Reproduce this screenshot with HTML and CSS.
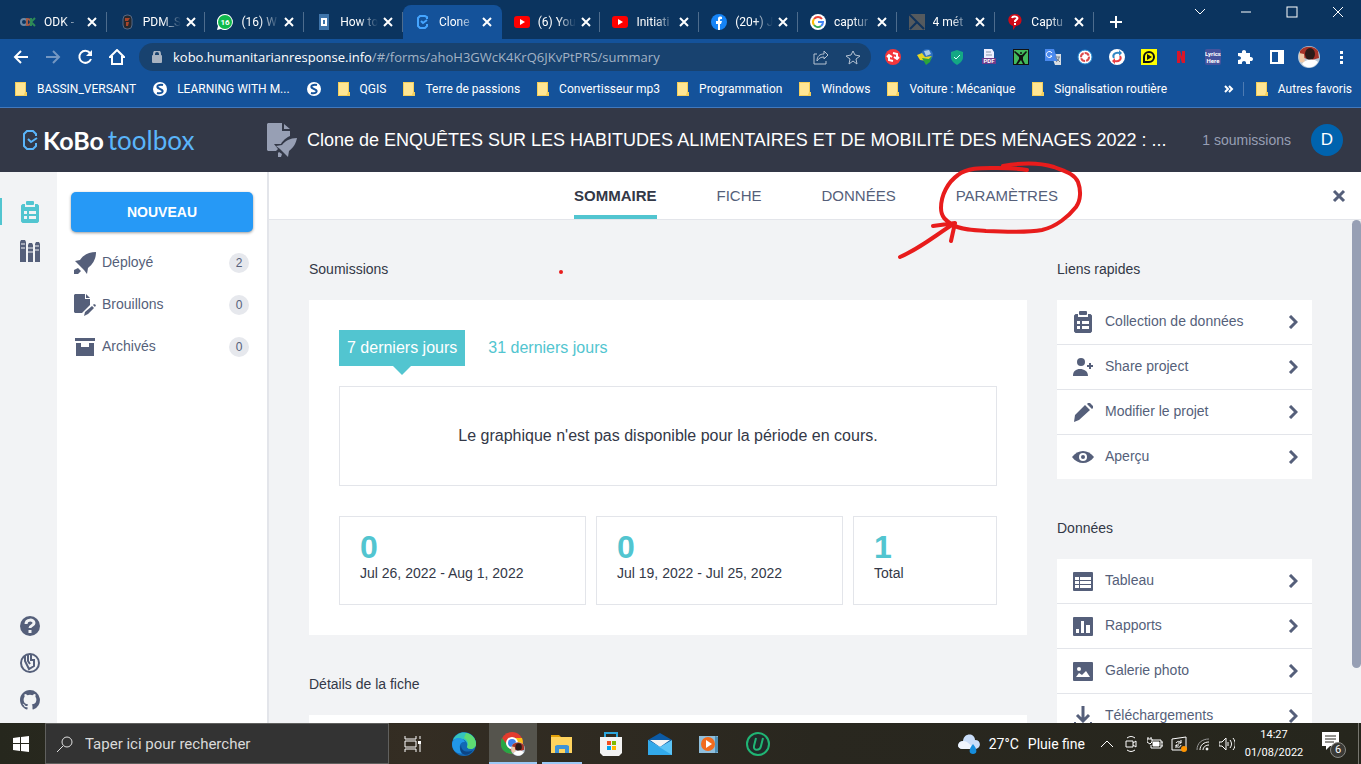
FILE: index.html
```html
<!DOCTYPE html>
<html lang="fr">
    <head>
        <meta charset="utf-8" />
        <meta name="viewport" content="width=device-width, initial-scale=1" />
        <title>Clone de ENQUÊTES | KoBoToolbox</title>
        <link rel="stylesheet" href="styles.css">
    </head>
    <body>
        <!-- shared icons -->
        <svg class="sprite" aria-hidden="true">
            <symbol id="x" viewBox="0 0 10 10"><path d="M1 1l8 8M9 1L1 9" stroke="currentColor" stroke-width="2" fill="none"/></symbol>
            <symbol id="folder" viewBox="0 0 12 14"><path d="M0 0h11v10h1v4H0z" fill="#f4cf5c"/><path d="M1 1h9v9l-1 3H1z" fill="#ffe694"/></symbol>
            <symbol id="globe" viewBox="0 0 14 14"><circle cx="7" cy="7" r="7" fill="#fff"/><path d="M10 3C6 2 3 4 5 6l4 2c2 2-1 4-5 3" fill="none" stroke="#14529a" stroke-width="2"/></symbol>
            <symbol id="chev" viewBox="0 0 10 14"><path d="M2 1l6 6-6 6" fill="none" stroke="#555f7a" stroke-width="3"/></symbol>
            <symbol id="youtube" viewBox="0 0 16 12"><rect width="16" height="12" rx="3" fill="#f00"/><path d="M6 3v6l5-3z" fill="#fff"/></symbol>
            <symbol id="clipboard" viewBox="0 0 18 22"><path d="M1.500 3H4v3h10V3h2.500L18 4.500v16L16.500 22h-15L0 20.500v-16zM3 10v3h3v-3zm5 0v3h7v-3zm-5 5v3h3v-3zm5 0v3h7v-3z" fill="currentColor" fill-rule="evenodd"/><rect x="5" y="0" width="8" height="4" rx="1" fill="currentColor"/></symbol>
            <symbol id="face" viewBox="0 0 22 22"><circle cx="11" cy="11" r="11" fill="#b9c8d6"/><path d="M2 5C5 0 16-1 20 5l1 7-7 2-12-3z" fill="#a63328"/><path d="M1 7l5 1 1 9-5-1z" fill="#efc8a6"/><ellipse cx="12" cy="8" rx="5" ry="6" fill="#2b1b18"/><path d="M4 18c3-5 12-6 16-2-3 5-10 8-16 2z" fill="#fff"/></symbol>
        </svg>

        <div class="tabStrip">
            <div class="tabs">
                <div class="tab"><svg class="tabIcon" viewBox="0 0 16 16"><ellipse cx="4" cy="8" rx="3" ry="3" fill="none" stroke="#6b87a5" stroke-width="2"/><path d="M7 5c5 0 5 6 0 6z" fill="none" stroke="#a75c46" stroke-width="2"/><path d="M11 4v8M15 4l-4 4 4 4" fill="none" stroke="#2e8b57" stroke-width="2"/></svg><span class="tabTitle">ODK -</span><button class="tabClose" aria-label="Fermer"><svg><use href="#x"/></svg></button></div>
                <div class="tab"><svg class="tabIcon" viewBox="0 0 16 16"><rect x="4" y="1" width="9" height="14" rx="4" fill="#26282d" stroke="#566985"/><path d="M6 4h5l-2 3H6zM7 8h3l-1 4H7z" fill="#a8452b"/></svg><span class="tabTitle">PDM_S</span><button class="tabClose" aria-label="Fermer"><svg><use href="#x"/></svg></button></div>
                <div class="tab"><svg class="tabIcon" viewBox="0 0 16 16"><path d="M8 0a8 8 0 1 1-4 15l-4 1 1-4A8 8 0 0 1 8 0z" fill="#fff"/><circle cx="8" cy="8" r="7" fill="#10b94c"/><text x="8" y="11" text-anchor="middle" class="tinyCount">16</text></svg><span class="tabTitle">(16) W</span><button class="tabClose" aria-label="Fermer"><svg><use href="#x"/></svg></button></div>
                <div class="tab"><svg class="tabIcon" viewBox="0 0 16 16"><rect x="3" width="10" height="16" fill="#3f75ab"/><path d="M6 5h4v6H6z" fill="none" stroke="#fff" stroke-width="2"/></svg><span class="tabTitle">How to</span><button class="tabClose" aria-label="Fermer"><svg><use href="#x"/></svg></button></div>
                <div class="tab active"><svg class="tabIcon" viewBox="0 0 16 16"><path d="M12 5V3l-2-1H5L3 4v8l2 2h5l2-2v-2" fill="none" stroke="#45a5ff" stroke-width="2"/><path d="M6 7l2 2 4-3" fill="none" stroke="#45a5ff" stroke-width="2"/></svg><span class="tabTitle">Clone</span><button class="tabClose" aria-label="Fermer"><svg><use href="#x"/></svg></button></div>
                <div class="tab"><svg class="tabIcon"><use href="#youtube"/></svg><span class="tabTitle">(6) You</span><button class="tabClose" aria-label="Fermer"><svg><use href="#x"/></svg></button></div>
                <div class="tab"><svg class="tabIcon"><use href="#youtube"/></svg><span class="tabTitle">Initiati</span><button class="tabClose" aria-label="Fermer"><svg><use href="#x"/></svg></button></div>
                <div class="tab"><svg class="tabIcon" viewBox="0 0 16 16"><circle cx="8" cy="8" r="8" fill="#1684f6"/><path d="M7 16V10H5V7h2V5c0-2 1-3 4-2v2C9 5 9 5 9 7h2l-1 3H9v6z" fill="#fff"/></svg><span class="tabTitle">(20+) J</span><button class="tabClose" aria-label="Fermer"><svg><use href="#x"/></svg></button></div>
                <div class="tab"><svg class="tabIcon" viewBox="0 0 16 16"><circle cx="8" cy="8" r="8" fill="#fff"/><g fill="none" stroke-width="2"><path d="M12 5A5 5 0 0 0 4 5" stroke="#ea4335"/><path d="M4 5a5 5 0 0 0 0 6" stroke="#fbbc05"/><path d="M4 11a5 5 0 0 0 7 1" stroke="#34a853"/><path d="M8 8h5a5 5 0 0 1-2 4" stroke="#4285f4"/></g></svg><span class="tabTitle">captur</span><button class="tabClose" aria-label="Fermer"><svg><use href="#x"/></svg></button></div>
                <div class="tab"><svg class="tabIcon" viewBox="0 0 16 16"><rect width="16" height="16" fill="#555a5e"/><path d="M0 0l15 15M1 15l7-7" stroke="#10335c" stroke-width="2"/></svg><span class="tabTitle">4 mét</span><button class="tabClose" aria-label="Fermer"><svg><use href="#x"/></svg></button></div>
                <div class="tab"><svg class="tabIcon" viewBox="0 0 16 16"><path d="M8 0c8 0 9 11 1 12l-3 4v-4C-1 10 0 0 8 0z" fill="#cf0a17"/><path d="M5 4c1-3 7-1 5 1L8 7v1M8 9v2" fill="none" stroke="#fff" stroke-width="2"/></svg><span class="tabTitle">Captu</span><button class="tabClose" aria-label="Fermer"><svg><use href="#x"/></svg></button></div>
            </div>
            <button class="newTab" aria-label="Nouvel onglet"><svg viewBox="0 0 12 12"><path d="M6 0v12M0 6h12" stroke="#fff" stroke-width="2"/></svg></button>
            <div class="windowButtons">
                <button aria-label="Rechercher"><svg viewBox="0 0 12 12"><path d="M1 3l5 5 5-5"/></svg></button>
                <button aria-label="Réduire"><svg viewBox="0 0 12 12"><path d="M1 6h10"/></svg></button>
                <button aria-label="Agrandir"><svg viewBox="0 0 12 12"><rect x="1" y="1" width="10" height="10"/></svg></button>
                <button aria-label="Fermer"><svg viewBox="0 0 12 12"><path d="M1 1l10 10M11 1L1 11"/></svg></button>
            </div>
        </div>

        <div class="toolbar">
            <button aria-label="Retour"><svg viewBox="0 0 16 16"><path d="M15 8H2M8 2L2 8l6 6" fill="none" stroke="#fff" stroke-width="2"/></svg></button>
            <button aria-label="Avancer"><svg viewBox="0 0 16 16"><path d="M1 8h13M8 2l6 6-6 6" fill="none" stroke="#7497c2" stroke-width="2"/></svg></button>
            <button aria-label="Actualiser"><svg viewBox="0 0 16 16"><path d="M13 4a6 6 0 1 0 1 6" fill="none" stroke="#fff" stroke-width="2"/><path d="M15 1v6H9z" fill="#fff"/></svg></button>
            <button aria-label="Accueil"><svg viewBox="0 0 16 16"><path d="M1 8l7-7 7 7h-2v7H3V8z" fill="none" stroke="#fff" stroke-width="2"/></svg></button>
            <div class="omnibox">
                <svg class="lock" viewBox="0 0 10 12"><rect y="4" width="10" height="8" rx="1" fill="#a8b3c1"/><path d="M2 5V3a3 3 0 0 1 6 0v2" fill="none" stroke="#a8b3c1" stroke-width="2"/></svg>
                <a class="url" href="#">kobo.humanitarianresponse.info<span>/#/forms/ahoH3GWcK4KrQ6JKvPtPRS/summary</span></a>
                <button aria-label="Partager"><svg viewBox="0 0 16 16" fill="none" stroke="#b5c2d2"><path d="M4 5H1v10h12v-3M4 12c0-5 3-7 7-7V2l4 4-4 4V8C8 8 6 9 4 12z"/></svg></button>
                <button aria-label="Favori"><svg viewBox="0 0 16 16"><path d="M8 2l2 4 5 1-4 3 1 5-4-3-4 3 1-5-4-3 5-1z" fill="none" stroke="#b5c2d2"/></svg></button>
            </div>
            <button aria-label="Extension"><svg viewBox="0 0 16 16"><circle cx="8" cy="8" r="8" fill="#f4373b"/><path d="M4 7v4l4 1M2 8l2-2 3 2M12 9V5L8 4M14 8l-2 2-3-2" fill="none" stroke="#fff" stroke-width="2"/></svg></button>
            <button aria-label="Extension"><svg viewBox="0 0 16 16"><circle cx="10" cy="6" r="6" fill="#2d6fc0"/><path d="M7 2l5-1 2 4-5 2z" fill="#a9cbe8"/><path d="M0 6l5-2 3 4 7-1-5 5-7-1z" fill="#e5d526"/><path d="M5 9l7 1 3-3-2 6-4 3z" fill="#2ca43a"/></svg></button>
            <button aria-label="Extension"><svg viewBox="0 0 16 16"><path d="M2 3l6-2 6 2v5c0 4-3 6-6 8-3-2-6-4-6-8z" fill="#14a884"/><path d="M5 8l2 2 4-4" fill="none" stroke="#dff" stroke-width="1"/></svg></button>
            <button aria-label="Extension"><svg viewBox="0 0 16 16"><path d="M3 0h8l2 3v6H3z" fill="#eef"/><path d="M5 3h5M5 6h6" stroke="#89a"/><rect x="1" y="9" width="14" height="6" fill="#6e3b8b"/><text x="8" y="14" text-anchor="middle" class="extText">PDF</text></svg></button>
            <button aria-label="Extension"><svg viewBox="0 0 16 16"><rect width="16" height="16" fill="#111"/><rect x="1" y="1" width="14" height="14" fill="#42b95c"/><circle cx="8" cy="4" r="1" fill="#111"/><path d="M2 2l5 4h2l4-4 1 1-4 5v3l2 4H10L8 11l-3 4H3l3-5V8L1 3z" fill="#111"/></svg></button>
            <button aria-label="Extension"><svg viewBox="0 0 16 16"><path d="M6 5h10v11h-6z" fill="#d8dde3"/><path d="M0 0h9l4 12H0z" fill="#4a89ee"/><path d="M7 4a3 3 0 1 0 0 3H5" fill="none" stroke="#fff"/><path d="M10 8h5m-1 0c0 3-2 4-3 5m0-4l4 4" fill="none" stroke="#78838e"/></svg></button>
            <button aria-label="Extension"><svg viewBox="0 0 16 16"><circle cx="8" cy="8" r="7" fill="#fff" stroke="#248bd3"/><circle cx="8" cy="8" r="4" fill="none" stroke="#dc4b4d" stroke-dasharray="5 1" stroke-width="2"/><circle cx="8" cy="8" r="2" fill="#fff"/></svg></button>
            <button aria-label="Extension"><svg viewBox="0 0 16 16"><circle cx="8" cy="8" r="8" fill="#fff"/><path d="M10 4C6 3 3 6 5 9" fill="none" stroke="#3187c5" stroke-width="2"/><path d="M10 1l3 3-3 3z" fill="#3187c5"/><path d="M6 12c4 1 7-2 5-5" fill="none" stroke="#eb3e43" stroke-width="2"/><path d="M6 9v6l-3-3z" fill="#eb3e43"/></svg></button>
            <button aria-label="Extension"><svg viewBox="0 0 16 16"><rect width="16" height="16" fill="#ff0"/><path d="M3 13V8a5 5 0 1 1 5 5z" fill="none" stroke="#111" stroke-width="2"/><path d="M6 5v6l5-3z" fill="#111"/></svg></button>
            <button aria-label="Extension"><svg viewBox="0 0 16 16"><path d="M4 2h3l2 6V2h3v12H9L7 8v6H4z" fill="#d8162a"/></svg></button>
            <button aria-label="Extension"><svg viewBox="0 0 16 16"><rect width="16" height="16" rx="2" fill="#45539d"/><text x="8" y="7" text-anchor="middle" class="extText">Lyrics</text><text x="8" y="14" text-anchor="middle" class="extText">Here</text></svg></button>
            <button aria-label="Extensions"><svg viewBox="0 0 16 16"><path d="M1 4h4c-1-4 5-4 4 0h4v4c4-1 4 5 0 4v3H9c1-4-5-4-4 0H1v-4c4 0 4-4 0-4z" fill="#fff"/></svg></button>
            <button aria-label="Panneau latéral"><svg viewBox="0 0 16 16"><path d="M1 1h14v14H1zM3 3v10h6V3z" fill="#fff" fill-rule="evenodd"/></svg></button>
            <button class="profile" aria-label="Profil"><svg><use href="#face"/></svg></button>
            <button aria-label="Menu"><svg viewBox="0 0 16 16" fill="#fff"><path d="M7 2h3v3H7zM7 7h3v3H7zM7 12h3v3H7z"/></svg></button>
        </div>

        <nav class="bookmarks">
            <a href="#"><svg class="folder"><use href="#folder"/></svg>BASSIN_VERSANT</a>
            <a href="#"><svg class="globe"><use href="#globe"/></svg>LEARNING WITH M...</a>
            <a href="#" aria-label="Site"><svg class="globe"><use href="#globe"/></svg></a>
            <a href="#"><svg class="folder"><use href="#folder"/></svg>QGIS</a>
            <a href="#"><svg class="folder"><use href="#folder"/></svg>Terre de passions</a>
            <a href="#"><svg class="folder"><use href="#folder"/></svg>Convertisseur mp3</a>
            <a href="#"><svg class="folder"><use href="#folder"/></svg>Programmation</a>
            <a href="#"><svg class="folder"><use href="#folder"/></svg>Windows</a>
            <a href="#"><svg class="folder"><use href="#folder"/></svg>Voiture : Mécanique</a>
            <a href="#"><svg class="folder"><use href="#folder"/></svg>Signalisation routière</a>
            <button class="more" aria-label="Autres"><svg viewBox="0 0 10 8"><path d="M1 1l3 3-3 3M5 1l3 3-3 3" fill="none" stroke="#fff" stroke-width="2"/></svg></button>
            <a class="others" href="#"><svg class="folder"><use href="#folder"/></svg>Autres favoris</a>
        </nav>

        <header class="appHeader">
            <a class="logo" href="#">
                <svg viewBox="0 0 15 20"><path d="M13 6V4l-3-3H4L1 4v12l3 3h6l3-3v-3" fill="none" stroke="#5ab5fa" stroke-width="2"/><path d="M5 9l3 3 6-4" fill="none" stroke="#5ab5fa" stroke-width="2"/></svg>
                <span class="kobo">KoBo</span><span class="toolbox">toolbox</span>
            </a>
            <svg class="projectIcon" viewBox="0 0 30 34"><path d="M1 0h14v8h8v5c-6 3-8 6-9 8H7l4 5-2 2H1L0 27V1zM17 1l6 5h-6z" fill="#979fb4"/><path d="M30 15c-7 0-12 3-15 7l-6 1 4 3 4 4 4 4 1-6c5-4 7-8 8-13zM12 29l3 2-1 3h-3v-4z" fill="#979fb4"/></svg>
            <h1 class="title">Clone de ENQUÊTES SUR LES HABITUDES ALIMENTAIRES ET DE MOBILITÉ DES MÉNAGES 2022 : ...</h1>
            <span class="count">1 soumissions</span>
            <button class="avatar">D</button>
        </header>

        <div class="app">
            <nav class="rail">
                <a class="current" href="#" aria-label="Projets"><svg class="railClip"><use href="#clipboard"/></svg></a>
                <a href="#" aria-label="Bibliothèque"><svg viewBox="0 0 20 22"><path d="M0 2l1-2h4l1 2v20H0zM8 5l1-2h3l1 2v17H8zM15 4l1-2h3l1 2v18h-5z" fill="#555f7a"/><path d="M1 4h4M1 8h4M8 8h5M8 12h5M15 6h4M15 10h4" stroke="#f2f3f5"/></svg></a>
                <div class="railBottom">
                    <a href="#" aria-label="Aide"><svg viewBox="0 0 20 20"><circle cx="10" cy="10" r="10" fill="#555f7a"/><path d="M6 8c0-5 8-5 8-1 0 3-4 2-4 5M10 14v3" fill="none" stroke="#f2f3f5" stroke-width="3"/></svg></a>
                    <a href="#" aria-label="Communauté"><svg viewBox="0 0 20 20" fill="none" stroke="#555f7a" stroke-width="2"><circle cx="10" cy="10" r="9"/><path d="M5 3v5l4 8 5-3V7h-3V2M8 2v6l2 3"/></svg></a>
                    <a href="#" aria-label="GitHub"><svg viewBox="0 0 16 16"><path fill="#555f7a" d="M8 0C3.580 0 0 3.580 0 8c0 3.540 2.290 6.530 5.470 7.590.4.070.55-.17.55-.38V13.700c-2.230.48-2.700-.95-2.700-.95-.36-.92-.9-1.170-.9-1.170-.72-.5.06-.49.06-.49.8.06 1.230.83 1.230.83.71 1.220 1.870.87 2.330.66.070-.52.28-.87.5-1.070-1.780-.2-3.640-.89-3.640-3.950 0-.87.31-1.590.82-2.150-.08-.2-.36-1.020.08-2.120 0 0 .67-.21 2.200.82a7.600 7.600 0 0 1 4 0c1.530-1.040 2.200-.82 2.200-.82.44 1.100.16 1.920.08 2.120.51.56.82 1.270.82 2.150 0 3.070-1.870 3.750-3.650 3.950.29.25.54.73.54 1.480v2.200c0 .21.15.46.55.38A8 8 0 0 0 8 0z"/></svg></a>
                </div>
            </nav>

            <aside class="drawer">
                <button class="newButton">NOUVEAU</button>
                <a class="filter" href="#"><svg viewBox="0 0 22 22"><path d="M22 0C15 0 9 3 6 8l-5 1 4 4 5 5 3 4 1-6c5-4 8-9 8-16zM4 16l3 3-3 3H0v-4z" fill="#555f7a"/></svg><span>Déployé</span><span class="badge">2</span></a>
                <a class="filter" href="#"><svg viewBox="0 0 22 22"><path d="M1 0h10v5h5v6l-8 8H1l-1-1V1zM12 0l4 4h-4zM18 12l2 2-6 6-4 2 1-4zM20 10l2 1-1 2-2-2z" fill="#555f7a"/></svg><span>Brouillons</span><span class="badge">0</span></a>
                <a class="filter" href="#"><svg viewBox="0 0 22 22"><path d="M1 2h20v3H1zM2 7h5v4h8V7h5v13H2z" fill="#555f7a"/></svg><span>Archivés</span><span class="badge">0</span></a>
            </aside>

            <main class="project">
                <nav class="projectTabs">
                    <a class="selected" href="#">SOMMAIRE</a>
                    <a href="#">FICHE</a>
                    <a href="#">DONNÉES</a>
                    <a class="marked" href="#">PARAMÈTRES
                        <svg class="mark" viewBox="0 0 190 106"><path d="M131 10c-11-2-20-2-30-2-13 0-29-1-39 7-10 7-17 20-17 33 0 9 5 13 12 17 8 5 21 5 33 6 20 1 40 2 56-1 14-3 27-14 34-23 5-7 5-17 2-25-4-9-15-11-24-15-16-5-35-4-51-1M4 97c21-9 37-23 55-34M37 66l22-3-4 18" /></svg>
                    </a>
                    <button class="closeProject" aria-label="Fermer"><svg viewBox="0 0 14 14"><path d="M2 2l10 10M12 2L2 12" stroke="#555f7a" stroke-width="3"/></svg></button>
                </nav>

                <div class="scroller">
                    <div class="summary">
                        <div class="column">
                            <section>
                                <h2>Soumissions<i class="redDot"></i></h2>
                                <div class="card">
                                    <div class="periods">
                                        <button class="on">7 derniers jours</button>
                                        <button>31 derniers jours</button>
                                    </div>
                                    <div class="graph">Le graphique n'est pas disponible pour la période en cours.</div>
                                    <div class="stats">
                                        <div><strong>0</strong><span>Jul 26, 2022 - Aug 1, 2022</span></div>
                                        <div><strong>0</strong><span>Jul 19, 2022 - Jul 25, 2022</span></div>
                                        <div><strong>1</strong><span>Total</span></div>
                                    </div>
                                </div>
                            </section>
                            <section>
                                <h2>Détails de la fiche</h2>
                                <div class="card"></div>
                            </section>
                        </div>
                        <div class="column">
                            <section>
                                <h2>Liens rapides</h2>
                                <div class="links">
                                    <a href="#"><svg><use href="#clipboard"/></svg><span>Collection de données</span><svg class="chev"><use href="#chev"/></svg></a>
                                    <a href="#"><svg viewBox="0 0 22 22"><path d="M1 20c0-5 3-7 7-7s8 2 8 7zM17 7h2v2h2v2h-2v2h-2v-2h-2V9h2z" fill="#555f7a"/><circle cx="9" cy="6" r="4" fill="#555f7a"/></svg><span>Share project</span><svg class="chev"><use href="#chev"/></svg></a>
                                    <a href="#"><svg viewBox="0 0 22 22"><path d="M13 4l5 5L7 19l-5 2 1-7zM15 3l1-1h2l3 3v2l-1 1z" fill="#555f7a"/></svg><span>Modifier le projet</span><svg class="chev"><use href="#chev"/></svg></a>
                                    <a href="#"><svg viewBox="0 0 22 22"><path d="M0 11c6-8 16-8 22 0-6 8-16 8-22 0z" fill="#555f7a"/><circle cx="11" cy="11" r="4" fill="#fff"/><circle cx="11" cy="11" r="2" fill="#555f7a"/></svg><span>Aperçu</span><svg class="chev"><use href="#chev"/></svg></a>
                                </div>
                            </section>
                            <section>
                                <h2>Données</h2>
                                <div class="links">
                                    <a href="#"><svg viewBox="0 0 22 22"><rect x="1" y="2" width="20" height="19" rx="1" fill="#555f7a"/><path d="M3 7h4v3H3zM8 7h11v3H8zM3 11h4v3H3zM8 11h11v3H8zM3 15h4v3H3zM8 15h11v3H8z" fill="#fff"/></svg><span>Tableau</span><svg class="chev"><use href="#chev"/></svg></a>
                                    <a href="#"><svg viewBox="0 0 22 22"><rect x="1" y="2" width="20" height="19" rx="1" fill="#555f7a"/><path d="M4 14h3v4H4zM9 6h3v12H9zM14 10h4v8h-4z" fill="#fff"/></svg><span>Rapports</span><svg class="chev"><use href="#chev"/></svg></a>
                                    <a href="#"><svg viewBox="0 0 22 22"><rect x="1" y="2" width="20" height="19" rx="1" fill="#555f7a"/><path d="M4 17l3-4 3 2 4-4 4 6z" fill="#fff"/><circle cx="7" cy="9" r="2" fill="#fff"/></svg><span>Galerie photo</span><svg class="chev"><use href="#chev"/></svg></a>
                                    <a href="#"><svg viewBox="0 0 22 22"><path d="M11 1v15M5 10l6 6 6-6" fill="none" stroke="#555f7a" stroke-width="3"/><path d="M3 17v4h16v-4" fill="none" stroke="#555f7a" stroke-width="2"/></svg><span>Téléchargements</span><svg class="chev"><use href="#chev"/></svg></a>
                                </div>
                            </section>
                        </div>
                    </div>
                    <div class="scrollbar"><div class="thumb"></div></div>
                </div>
            </main>
        </div>

        <footer class="taskbar">
            <button class="start" aria-label="Démarrer"><svg viewBox="0 0 16 16"><path d="M0 2l7-1v6H0zM8 1l8-1v7H8zM0 8h7v7l-7-1zM8 8h8v8l-8-1z" fill="#fff"/></svg></button>
            <label class="search">
                <svg viewBox="0 0 16 16"><circle cx="10" cy="6" r="5" fill="none" stroke="#e0e0e0"/><path d="M6 10l-6 6" stroke="#e0e0e0"/></svg>
                <input type="text" placeholder="Taper ici pour rechercher" aria-label="Rechercher" />
            </label>
            <button class="taskView" aria-label="Vue des tâches"><svg viewBox="0 0 18 16" fill="none" stroke="#fff"><path d="M1 0v3h11V0M1 16v-3h11v3M1 5h11v6H1zM16 0v3M16 8v8"/><path d="M14 5h3v3h-3z" fill="#fff" stroke="none"/></svg></button>
            <div class="pinned">
                <button aria-label="Edge"><svg viewBox="0 0 24 24"><circle cx="12" cy="12" r="12" fill="#1268b5"/><path d="M1 8C5-3 22-2 24 11c0 7-8 7-9 4 2-8-7-10-14-7z" fill="#35c4bd"/><path d="M14 1c6 1 10 6 10 11 0 6-8 6-9 3 2-3 1-7-3-9z" fill="#5edb72"/><path d="M0 12c1-8 11-7 13-2-6-1-7 7-2 11-5 2-11-2-11-9z" fill="#2196e8"/><path d="M9 13c0 7 7 8 12 5-5 9-16 4-12-5z" fill="#0c4585"/></svg></button>
                <button class="open" aria-label="Chrome"><svg viewBox="0 0 24 24"><circle cx="11" cy="11" r="11" fill="#e33b2e"/><path d="M1 6l6 8 5 8C0 22-2 12 1 6z" fill="#28a745"/><path d="M12 6h9c3 7-2 15-9 16l5-10z" fill="#fbc116"/><circle cx="11" cy="11" r="6" fill="#fff"/><circle cx="11" cy="11" r="4" fill="#3d82ec"/><svg x="10" y="10" width="14" height="14"><use href="#face"/></svg></svg></button>
                <button class="running" aria-label="Explorateur"><svg viewBox="0 0 24 24"><path d="M1 3h8l2 2h11v5H1z" fill="#e3a008"/><path d="M1 5h21v16H1z" fill="#ffd35e"/><path d="M5 21v-7l2-1h10l2 1v7h-4v-4H9v4z" fill="#3f93d6"/></svg></button>
                <button aria-label="Microsoft Store"><svg viewBox="0 0 24 24"><path d="M6 6V1h12v5" fill="none" stroke="#2ca5dc" stroke-width="2"/><path d="M1 5h22v16l-3 3H4l-3-3z" fill="#f3f3f3"/><path d="M8 9h4v4H8z" fill="#f25022"/><path d="M13 9h4v4h-4z" fill="#7fba00"/><path d="M8 14h4v4H8z" fill="#00a4ef"/><path d="M13 14h4v4h-4z" fill="#ffb900"/></svg></button>
                <button aria-label="Courrier"><svg viewBox="0 0 24 24"><path d="M0 8l12-7 12 7-12 8z" fill="#0b5aa5"/><path d="M2 8h20l-10 7z" fill="#f4f4f4"/><path d="M0 8l12 7 12-7v15H0z" fill="#5cc4f6"/><path d="M0 8l24 15H0z" fill="#32a9ea"/></svg></button>
                <button aria-label="Lecteur multimédia"><svg viewBox="0 0 24 24"><path d="M2 4h19v17H2z" fill="#8fbfdd"/><path d="M18 4l3 1v15l-3 1z" fill="#4f8fb5"/><circle cx="11" cy="12" r="7" fill="#f26b1d"/><path d="M9 8v8l6-4z" fill="#fff"/></svg></button>
                <button aria-label="Uninstaller"><svg viewBox="0 0 24 24"><circle cx="12" cy="12" r="11" fill="#202b2a" stroke="#20b574" stroke-width="2"/><path d="M10 6l-2 8c-1 5 6 5 7 0l2-8" fill="none" stroke="#20b574" stroke-width="2"/></svg></button>
            </div>
            <div class="tray">
                <button class="weather"><svg viewBox="0 0 22 20"><path d="M5 15c-7 0-6-8 0-8C6-2 17-1 17 6c7 0 6 9 0 9z" fill="#c9ddf8"/><path d="M5 15c-7 0-6-7 0-8 5 0 8 5 12 8z" fill="#f0f5fd"/><path d="M15 10c5 6 4 10 0 10s-5-4 0-10z" fill="#168ddc"/></svg><span>27°C</span><span>Pluie fine</span></button>
                <button aria-label="Icônes cachées"><svg viewBox="0 0 16 16"><path d="M2 11l6-6 6 6"/></svg></button>
                <button aria-label="Caméra"><svg viewBox="0 0 16 16"><path d="M4 2c3-2 5-2 8 0M4 14c3 2 5 2 8 0M3 5h7v6H3zM10 7l3-2v6l-3-2"/></svg></button>
                <button aria-label="Batterie"><svg viewBox="0 0 16 16"><path d="M5 4h9v8H4V9M14 6h2v4h-2M0 3h5v3L3 8 0 6zM1 1v2M4 1v2"/><path d="M6 6h6v4H6z" fill="#fff"/></svg></button>
                <button aria-label="Mise à jour"><svg viewBox="0 0 16 16"><path d="M1 3l14-2v13H1zM5 7c2-3 5-1 5 0M10 4v3H7M5 12V9h3M5 9c1 3 4 3 5 0"/><circle cx="13" cy="13" r="3" fill="#ff9500" stroke="none"/></svg></button>
                <button aria-label="Réseau"><svg viewBox="0 0 16 16"><path d="M2 14C2 7 7 3 14 3" stroke="#999"/><path d="M5 14c0-5 4-8 9-8M8 14c0-3 3-5 6-5"/><circle cx="12" cy="13" r="1" fill="#fff"/></svg></button>
                <button aria-label="Volume"><svg viewBox="0 0 16 16"><path d="M0 6h3l4-4v12l-4-4H0zM9 6v4M11 4c2 3 2 5 0 8M14 2c3 4 3 8 0 12"/></svg></button>
                <button class="clock"><span>14:27</span><span>01/08/2022</span></button>
                <button class="notifications" aria-label="Notifications"><svg viewBox="0 0 24 24"><path d="M0 0h17v14H8l-4 4v-4H0z" fill="#fff"/><path d="M3 4h11M3 7h11M3 10h9" stroke="#29271f"/></svg><span>6</span></button>
            </div>
        </footer>
    </body>
</html>
```
FILE: styles.css
```css
* {
    box-sizing: border-box;
}

html, body {
    margin: 0;
    height: 100%;
}

body {
    display: flex;
    flex-direction: column;
    overflow: hidden;
    font-family: "Liberation Sans", Arial, sans-serif;
    font-size: 14px;
    color: #333847;
}

a {
    color: inherit;
    text-decoration: none;
}

button {
    display: flex;
    align-items: center;
    justify-content: center;
    padding: 0;
    border: 0;
    background: none;
    color: inherit;
    font: inherit;
}

svg {
    flex: none;
}

.sprite {
    display: none;
}

/* browser */

.tabStrip, .toolbar, .bookmarks, .taskbar {
    flex: none;
    display: flex;
    color: white;
    font-family: Roboto, sans-serif;
    font-size: 12px;
}

.tabStrip {
    height: 39px;
    padding-left: 8px;
    background-color: #0b345f;
}

.tabs {
    display: flex;
    flex: 0 1 1086px;
    min-width: 0;
    padding-top: 5px;
}

.tab {
    display: flex;
    flex: 1 1 0;
    align-items: center;
    min-width: 0;
    padding: 0 7px 0 12px;
    background: linear-gradient(#4d6c8d, #4d6c8d) right center / 1px 20px no-repeat;
}

.tab.active {
    border-radius: 8px 8px 0 0;
    background: #14529a;
}

.tabIcon {
    width: 16px;
    height: 16px;
}

.tabTitle {
    flex: 1;
    margin-left: 8px;
    white-space: nowrap;
    -webkit-mask-image: linear-gradient(to right, black 50%, transparent);
    mask-image: linear-gradient(to right, black 50%, transparent);
}

.tabClose {
    width: 16px;
    height: 16px;
    margin-left: 2px;
}

.tabClose svg {
    width: 10px;
    height: 10px;
}

.tinyCount {
    font: bold 8px Roboto, sans-serif;
    fill: white;
}

.extText {
    font: bold 6px Roboto, sans-serif;
    fill: white;
}

.newTab {
    width: 44px;
    padding-top: 5px;
}

.newTab svg {
    width: 12px;
    height: 12px;
}

.windowButtons {
    display: flex;
    height: 24px;
    margin-left: auto;
}

.windowButtons button {
    width: 46px;
}

.windowButtons svg {
    width: 12px;
    height: 12px;
    fill: none;
    stroke: white;
}

.toolbar {
    align-items: center;
    height: 36px;
    padding: 0 4px 0 5px;
    background-color: #14529a;
}

.toolbar button {
    width: 32px;
    height: 28px;
}

.toolbar button svg {
    width: 16px;
    height: 16px;
}

.toolbar .profile svg {
    width: 22px;
    height: 22px;
}

.omnibox {
    display: flex;
    flex: 1;
    align-items: center;
    min-width: 0;
    height: 28px;
    margin: 0 6px;
    padding: 0 2px 0 13px;
    border-radius: 14px;
    background-color: #18426f;
}

.lock {
    width: 10px;
    height: 12px;
    margin-right: 11px;
}

.url {
    flex: 1;
    overflow: hidden;
    white-space: nowrap;
    font-family: "Open Sans", sans-serif;
    font-size: 13px;
}

.url span {
    color: #a3b3c5;
}

.bookmarks {
    align-items: center;
    gap: 17px;
    height: 33px;
    padding: 0 9px 4px 15px;
    border-bottom: 1px solid #4178bd;
    background-color: #14529a;
    white-space: nowrap;
}

.bookmarks a {
    display: flex;
    align-items: center;
    gap: 10px;
}

.folder {
    width: 12px;
    height: 14px;
}

.globe {
    width: 14px;
    height: 14px;
}

.more {
    margin-left: auto;
}

.more svg {
    width: 10px;
    height: 8px;
}

.bookmarks .others {
    margin-left: -8px;
    padding-left: 12px;
    border-left: 1px solid #4d7bb2;
}

/* kobo */

.appHeader {
    flex: none;
    display: flex;
    align-items: center;
    height: 64px;
    padding: 0 18px 0 23px;
    background-color: #333847;
    color: white;
}

.logo {
    display: flex;
    align-items: center;
    width: 244px;
    font-family: Lato, sans-serif;
    font-size: 26px;
    line-height: 32px;
}

.logo svg {
    width: 15px;
    height: 20px;
    margin-right: 5px;
}

.kobo {
    font-size: 25px;
    font-weight: bold;
}

.toolbox {
    margin-left: 4px;
    color: #5ab5fa;
}

.projectIcon {
    width: 30px;
    height: 34px;
}

.title {
    flex: 1;
    min-width: 0;
    margin: 0 0 0 10px;
    overflow: hidden;
    white-space: nowrap;
    font-size: 18px;
    font-weight: normal;
}

.count {
    margin: 0 20px;
    color: #979fb4;
}

.avatar {
    width: 32px;
    height: 32px;
    border-radius: 50%;
    background-color: #0063ae;
    font-size: 17px;
}

.app {
    display: flex;
    flex: 1;
    min-height: 0;
    background-color: #f2f3f5;
}

.rail {
    display: flex;
    flex-direction: column;
    width: 57px;
    padding: 20px 0 5px;
}

.rail a {
    display: flex;
    align-items: center;
    justify-content: center;
    height: 39px;
    padding-left: 2px;
}

.rail svg {
    width: 20px;
    height: 22px;
}

.rail .current {
    color: #52c5d0;
    background: linear-gradient(#52c5d0, #52c5d0) left center / 2px 27px no-repeat;
}

.railBottom {
    margin-top: auto;
}

.rail .railBottom a {
    height: 37px;
}

.rail .railBottom svg {
    height: 20px;
}

.drawer {
    width: 212px;
    padding: 20px 14px;
    border-right: 2px solid #e3e5ea;
    background-color: white;
    color: #555f7a;
}

.newButton {
    width: 100%;
    height: 40px;
    margin-bottom: 10px;
    padding-bottom: 1px;
    border-radius: 5px;
    background-color: #2699f6;
    box-shadow: 0 1px 3px rgba(0, 0, 0, 0.4);
    color: white;
    font-weight: bold;
}

.filter {
    display: flex;
    align-items: center;
    gap: 6px;
    height: 42px;
    padding: 0 4px 0 3px;
}

.filter span:not(.badge), .links span {
    padding-bottom: 2px;
}

.filter svg {
    width: 22px;
    height: 22px;
}

.badge {
    width: 20px;
    margin-left: auto;
    border-radius: 10px;
    background-color: #e6e8ed;
    font-size: 12px;
    line-height: 20px;
    text-align: center;
}

.project {
    display: flex;
    flex: 1;
    flex-direction: column;
    min-width: 0;
}

.projectTabs {
    position: relative;
    display: flex;
    flex: none;
    justify-content: center;
    gap: 60px;
    height: 48px;
    padding-left: 2px;
    border-bottom: 1px solid #e3e5ea;
    background-color: white;
    color: #555f7a;
    font-size: 15px;
    line-height: 48px;
}

.projectTabs .selected {
    border-bottom: 4px solid #52c5d0;
    color: #333847;
    font-weight: bold;
}

.marked {
    position: relative;
}

/* hand-drawn circle and arrow */
.mark {
    position: absolute;
    top: -12px;
    left: -60px;
    width: 190px;
    height: 106px;
    fill: none;
    stroke: #e81c1c;
    stroke-width: 4;
    stroke-linecap: round;
    stroke-linejoin: round;
    pointer-events: none;
}

.closeProject {
    position: absolute;
    top: 17px;
    right: 15px;
}

.closeProject svg {
    width: 14px;
    height: 14px;
}

.scroller {
    display: flex;
    flex: 1;
    min-height: 0;
    overflow: hidden;
}

.summary {
    display: grid;
    flex: 1;
    grid-template-columns: 1fr 255px;
    gap: 30px;
    padding: 40px;
}

.summary section {
    margin-bottom: 40px;
}

h2 {
    position: relative;
    margin: 0 0 22px;
    font-size: 14px;
    font-weight: normal;
    line-height: 18px;
}

.redDot {
    position: absolute;
    top: 10px;
    left: 250px;
    width: 4px;
    height: 4px;
    border-radius: 50%;
    background-color: #e81c1c;
}

.card {
    padding: 30px;
    background-color: white;
}

.periods {
    display: flex;
    gap: 15px;
}

.periods button {
    position: relative;
    height: 36px;
    padding: 0 8px;
    color: #52c5d0;
    font-size: 16px;
}

.periods .on {
    background-color: #52c5d0;
    color: white;
}

.periods .on::after {
    content: "";
    position: absolute;
    top: 100%;
    left: calc(50% - 9px);
    border: 9px solid transparent;
    border-top-color: #52c5d0;
    border-bottom: 0;
}

.graph {
    display: flex;
    align-items: center;
    justify-content: center;
    height: 100px;
    margin: 20px 0 30px;
    border: 1px solid #e3e5ea;
    font-size: 16px;
}

.stats {
    display: grid;
    grid-template-columns: 1fr 1fr 144px;
    gap: 10px;
}

.stats div {
    display: flex;
    flex-direction: column;
    padding: 14px 20px 21px;
    border: 1px solid #e3e5ea;
    line-height: 20px;
}

.stats strong {
    color: #52c5d0;
    font-size: 32px;
    line-height: 32px;
}

.links {
    background-color: white;
    color: #555f7a;
}

.links a {
    display: flex;
    align-items: center;
    gap: 11px;
    height: 45px;
    padding: 0 14px 0 15px;
    border-bottom: 1px solid #e3e5ea;
}

.links a:last-child {
    height: 44px;
    border-bottom: 0;
}

.links svg {
    width: 22px;
    height: 22px;
}

.links .chev {
    width: 10px;
    height: 14px;
    margin-left: auto;
}

.scrollbar {
    width: 9px;
}

.thumb {
    height: 89%;
    border-radius: 5px;
    background-color: #979fb4;
}

/* windows taskbar */

.taskbar {
    height: 41px;
    background: linear-gradient(to right, #26271d, #342d23 30%, #29271f 60%, #26261d);
    font-size: 15px;
}

.start {
    width: 45px;
    padding-right: 3px;
}

.start svg {
    width: 16px;
    height: 16px;
}

.search {
    display: flex;
    align-items: center;
    width: 344px;
    padding-left: 11px;
    border: 1px solid #60605e;
    background-color: #333333;
}

.search svg {
    width: 16px;
    height: 16px;
}

.search input {
    flex: 1;
    margin-left: 12px;
    padding: 0;
    border: 0;
    background: none;
    color: white;
    font: inherit;
}

.search input::placeholder {
    color: #dadada;
}

.taskView {
    width: 48px;
}

.taskView svg {
    width: 18px;
    height: 16px;
}

.pinned {
    display: flex;
    gap: 1px;
    margin-left: 3px;
}

.pinned button {
    width: 48px;
}

.pinned > button > svg {
    width: 24px;
    height: 24px;
}

.pinned .open {
    background-color: #55544d;
    box-shadow: inset 0 -2px #9cc9f6;
}

.pinned .running {
    background: linear-gradient(#9cc9f6, #9cc9f6) center bottom / 40px 2px no-repeat;
}

.tray {
    display: flex;
    margin-left: auto;
    padding-right: 2px;
    font-size: 14px;
}

.tray svg {
    width: 16px;
    height: 16px;
    fill: none;
    stroke: white;
}

.tray button {
    width: 24px;
}

.tray .weather {
    gap: 9px;
    width: auto;
    margin-right: 10px;
}

.tray .weather svg {
    width: 22px;
    height: 20px;
    stroke: none;
}

.tray .clock {
    flex-direction: column;
    width: 70px;
    font-size: 11px;
    line-height: 18px;
}

.tray .notifications {
    position: relative;
    width: 50px;
    border-right: 1px solid #77766f;
}

.tray .notifications svg {
    width: 24px;
    height: 24px;
    stroke: none;
}

.notifications span {
    position: absolute;
    top: 19px;
    right: 12px;
    width: 16px;
    border: 1px solid #8a8a86;
    border-radius: 50%;
    background-color: #3a3a36;
    font-size: 11px;
    line-height: 14px;
}
```
